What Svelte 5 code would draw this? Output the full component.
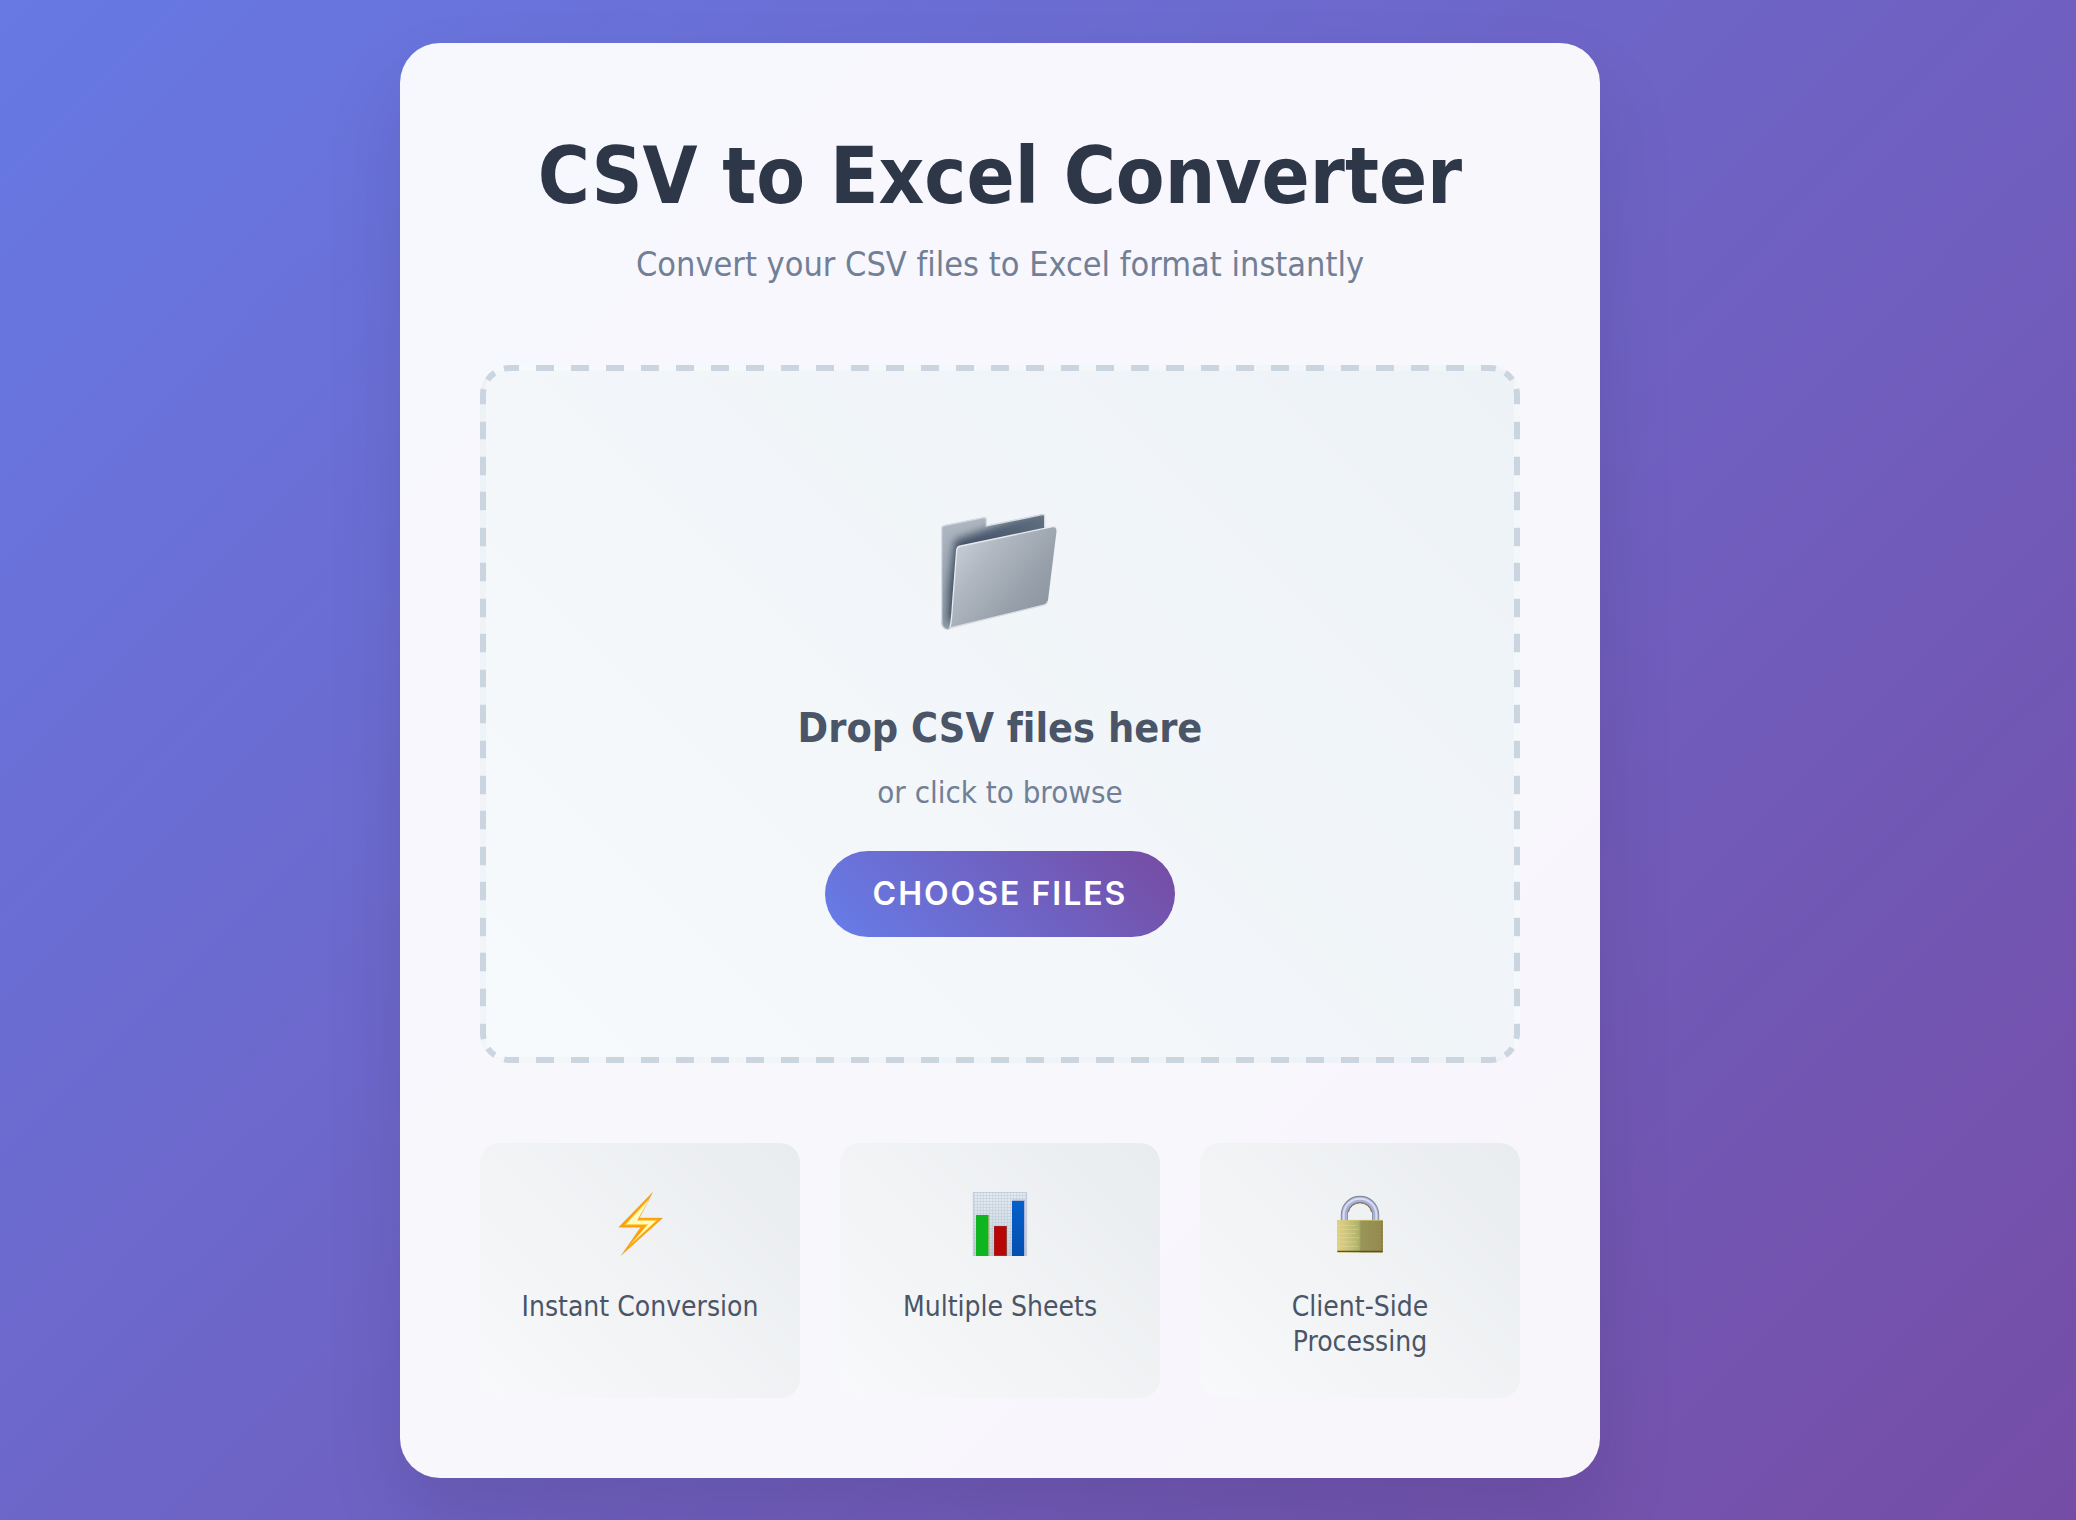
<script>
  const features = [
    { icon: 'bolt', label: 'Instant Conversion' },
    { icon: 'chart', label: 'Multiple Sheets' },
    { icon: 'lock', label: 'Client-Side Processing' }
  ];

  let picker;
</script>

<main class="page">
  <div class="card">
    <header>
      <h1>CSV to Excel Converter</h1>
      <p class="tagline">Convert your CSV files to Excel format instantly</p>
    </header>

    <section class="dropzone">
      <svg class="folder" viewBox="0 0 384 384" aria-hidden="true">
        <defs>
          <linearGradient id="folder-back" x1="0" y1="0" x2="0.2" y2="1">
            <stop offset="0" stop-color="#b2bbc4" />
            <stop offset="0.4" stop-color="#a3adb8" />
            <stop offset="1" stop-color="#8f9ba7" />
          </linearGradient>
          <linearGradient id="folder-depth" x1="0" y1="1" x2="1" y2="0">
            <stop offset="0" stop-color="#2f3d4f" />
            <stop offset="0.5" stop-color="#46556a" />
            <stop offset="1" stop-color="#667485" />
          </linearGradient>
          <linearGradient id="folder-front" x1="0" y1="0.1" x2="0.9" y2="0.8">
            <stop offset="0" stop-color="#ced3dd" />
            <stop offset="0.35" stop-color="#b1b8c2" />
            <stop offset="0.75" stop-color="#98a1ab" />
            <stop offset="1" stop-color="#8d97a1" />
          </linearGradient>
          <filter id="folder-soft" x="-30%" y="-30%" width="160%" height="160%">
            <feGaussianBlur stdDeviation="13" />
          </filter>
          <clipPath id="folder-clip">
            <path d="M16 64Q16 57 24 55L143 31Q151 30 152 37V56L318 22Q327 20 327 29V230L44 364Q34 370 24 364Q17 359 17 350Z" />
          </clipPath>
        </defs>
        <g clip-path="url(#folder-clip)">
          <rect x="10" y="16" width="324" height="356" fill="url(#folder-back)" />
          <path d="M56 100L150 66L230 36L350 0V230L60 340L38 350L40 240Z" fill="url(#folder-depth)" filter="url(#folder-soft)" />
        </g>
        <path d="M17 350V64Q17 58 24 56L143 32Q150 31 151 37V57L318 23Q326 21 326 29V62" fill="none" stroke="#d5dde3" stroke-width="4" />
        <path d="M17 342Q18 364 34 367Q43 366 45 352" fill="none" stroke="#c3ccd3" stroke-width="4" />
        <path d="M62 130Q63 119 74 117L350 59Q363 57 362 70L336 280Q335 291 325 294L42 363Q47 340 49 300Z" fill="url(#folder-front)" />
        <path d="M42 361Q47 340 49 300L62 130Q63 119 74 117L350 59Q363 57 362 70" fill="none" stroke="#e7ebf0" stroke-width="4" />
        <path d="M42 363L325 294Q333 291 336 282" fill="none" stroke="#d8dee4" stroke-width="4" />
      </svg>

      <h2>Drop CSV files here</h2>
      <p class="hint">or click to browse</p>
      <button type="button" class="choose" onclick={() => picker.click()}>Choose Files</button>
      <input bind:this={picker} type="file" accept=".csv" multiple hidden aria-label="CSV files" />
    </section>

    <ul class="features">
      {#each features as feature}
        <li>
          <svg class="feature-icon" viewBox="0 0 192 192" aria-hidden="true">
            {#if feature.icon === 'bolt'}
              <path d="M134 1L94 78H164L40 190L98 106H32Z" fill="#ff9d0a" stroke="#d9a850" stroke-width="1" />
              <path d="M127 15L48 100H115L59 167L150 83H84Z" fill="#ffc928" />
              <path d="M122 24L54 97H121L72 152L144 86H87Z" fill="#fffbc4" />
            {:else if feature.icon === 'chart'}
              <defs>
                <pattern id="chart-grid" width="9" height="9" patternUnits="userSpaceOnUse">
                  <rect width="9" height="9" fill="#eaf0f6" />
                  <path d="M0 1H9M1 0V9" stroke="#cdd8e4" stroke-width="3" />
                </pattern>
                <linearGradient id="chart-shade" x1="0" y1="0" x2="0" y2="1">
                  <stop offset="0" stop-color="#b9c4d0" stop-opacity="0.1" />
                  <stop offset="1" stop-color="#a9b3bf" stop-opacity="0.6" />
                </linearGradient>
                <linearGradient id="chart-blue" x1="0" y1="0" x2="0" y2="1">
                  <stop offset="0" stop-color="#0560c9" />
                  <stop offset="1" stop-color="#034fae" />
                </linearGradient>
              </defs>
              <rect x="15" y="0" width="162" height="192" fill="url(#chart-grid)" />
              <rect x="15" y="0" width="162" height="192" fill="url(#chart-shade)" />
              <path d="M16 192V1H176V192" fill="none" stroke="#c3cdd9" stroke-width="3" />
              <rect x="60" y="69" width="4" height="123" fill="#c5b48a" />
              <rect x="24" y="69" width="37" height="123" fill="#0eb520" />
              <rect x="78" y="102" width="39" height="90" fill="#8a4540" />
              <rect x="79" y="103" width="35" height="87" fill="#b80606" />
              <rect x="132" y="23" width="39" height="169" fill="#a9b8da" />
              <rect x="132" y="27" width="36" height="165" fill="url(#chart-blue)" />
            {:else}
              <defs>
                <linearGradient id="lock-body" x1="0" y1="0" x2="1" y2="0">
                  <stop offset="0" stop-color="#e0d084" />
                  <stop offset="0.2" stop-color="#cdc680" />
                  <stop offset="0.48" stop-color="#aeb169" />
                  <stop offset="0.52" stop-color="#999557" />
                  <stop offset="1" stop-color="#94894f" />
                </linearGradient>
              </defs>
              <path d="M49 88V68A47 46 0 0 1 143 68V88" fill="none" stroke="#7f8794" stroke-width="21" />
              <path d="M49 88V68A47 46 0 0 1 143 68V88" fill="none" stroke="#aab1d8" stroke-width="16" />
              <path d="M47 88V68A49 48 0 0 1 145 68V88" fill="none" stroke="#d9def5" stroke-width="6" />
              <path d="M61 60A36 36 0 0 1 131 60" fill="none" stroke="#84663f" stroke-width="3" />
              <rect x="27" y="84" width="138" height="98" rx="2" fill="url(#lock-body)" />
              <path d="M28 85H164" stroke="#d5cd79" stroke-width="2" />
              <path d="M29 100H86M29 112H92M29 125H84M29 137H94M29 150H86M29 163H90" stroke="#efe3a0" stroke-width="2" opacity="0.55" />
              <path d="M161 88V176" stroke="#776c42" stroke-width="2" stroke-dasharray="5 5" />
              <path d="M28 178H164" stroke="#5c4f2f" stroke-width="4" />
            {/if}
          </svg>
          <span>{feature.label}</span>
        </li>
      {/each}
    </ul>
  </div>
</main>

<style>
  :global(body) {
    margin: 0;
  }

  .page {
    box-sizing: border-box;
    display: flex;
    align-items: center;
    justify-content: center;
    min-height: 100vh;
    padding: 40px 116px 40px 40px;
    background: linear-gradient(135deg, #6779e4 0%, #754da6 100%);
    font-family: "DejaVu Sans Condensed", "Noto Sans", sans-serif;
    font-variant-ligatures: none;
    text-align: center;
  }

  .card {
    box-sizing: border-box;
    width: 100%;
    max-width: 1200px;
    padding: 80px;
    border-radius: 40px;
    background: rgba(255, 255, 255, 0.95);
    box-shadow: 0 40px 80px rgba(0, 0, 0, 0.1);
  }

  h1,
  h2,
  p {
    margin: 0;
  }

  h1 {
    margin-bottom: 14px;
    color: #2d3748;
    font-size: 79px;
    font-weight: 700;
    line-height: 106px;
  }

  .tagline {
    margin-bottom: 80px;
    color: #718096;
    font-size: 34px;
    line-height: 42px;
  }

  .dropzone {
    display: flex;
    flex-direction: column;
    align-items: center;
    padding: 120px 80px;
    border: 6px dashed #cbd5e0;
    border-image: url("data:image/svg+xml,%3Csvg xmlns='http://www.w3.org/2000/svg' width='95' height='95' fill='none' stroke='%23cbd5e0' stroke-width='6'%3E%3Cpath stroke-dasharray='6 10 10 10 7' d='M3 30A27 27 0 0 1 30 3M65 3A27 27 0 0 1 92 30M92 65A27 27 0 0 1 65 92M30 92A27 27 0 0 1 3 65'/%3E%3Cpath stroke-dasharray='9 17 9 0' d='M30 3H65M92 30V65M65 92H30M3 65V30'/%3E%3C/svg%3E") 30 / 30px round;
    border-radius: 30px;
    background: linear-gradient(45deg, #f7fafc, #edf2f7);
  }

  .folder {
    width: 128px;
    height: 128px;
    margin: 16px 0 68px;
  }

  h2 {
    margin-bottom: 20px;
    color: #4a5568;
    font-size: 41px;
    font-weight: 700;
    line-height: 50px;
  }

  .hint {
    margin-bottom: 40px;
    color: #718096;
    font-size: 31px;
    line-height: 38px;
  }

  .choose {
    padding: 24px 48px;
    border: 0;
    border-radius: 50px;
    background: linear-gradient(45deg, #667eea, #764ba2);
    color: #fff;
    font-family: Inter, sans-serif;
    font-size: 32px;
    font-weight: 600;
    line-height: 38px;
    letter-spacing: 2px;
    text-transform: uppercase;
    cursor: pointer;
  }

  .features {
    display: grid;
    grid-template-columns: repeat(3, 1fr);
    gap: 40px;
    margin: 80px 0 0;
    padding: 0;
    list-style: none;
  }

  .features li {
    display: flex;
    flex-direction: column;
    align-items: center;
    padding: 40px 40px 39px;
    border-radius: 20px;
    background: linear-gradient(45deg, #f8f9fa, #e9ecef);
    color: #4a5568;
    font-size: 28px;
    line-height: 35px;
  }

  .feature-icon {
    width: 64px;
    height: 64px;
    margin: 9px 0 33px;
  }
</style>
